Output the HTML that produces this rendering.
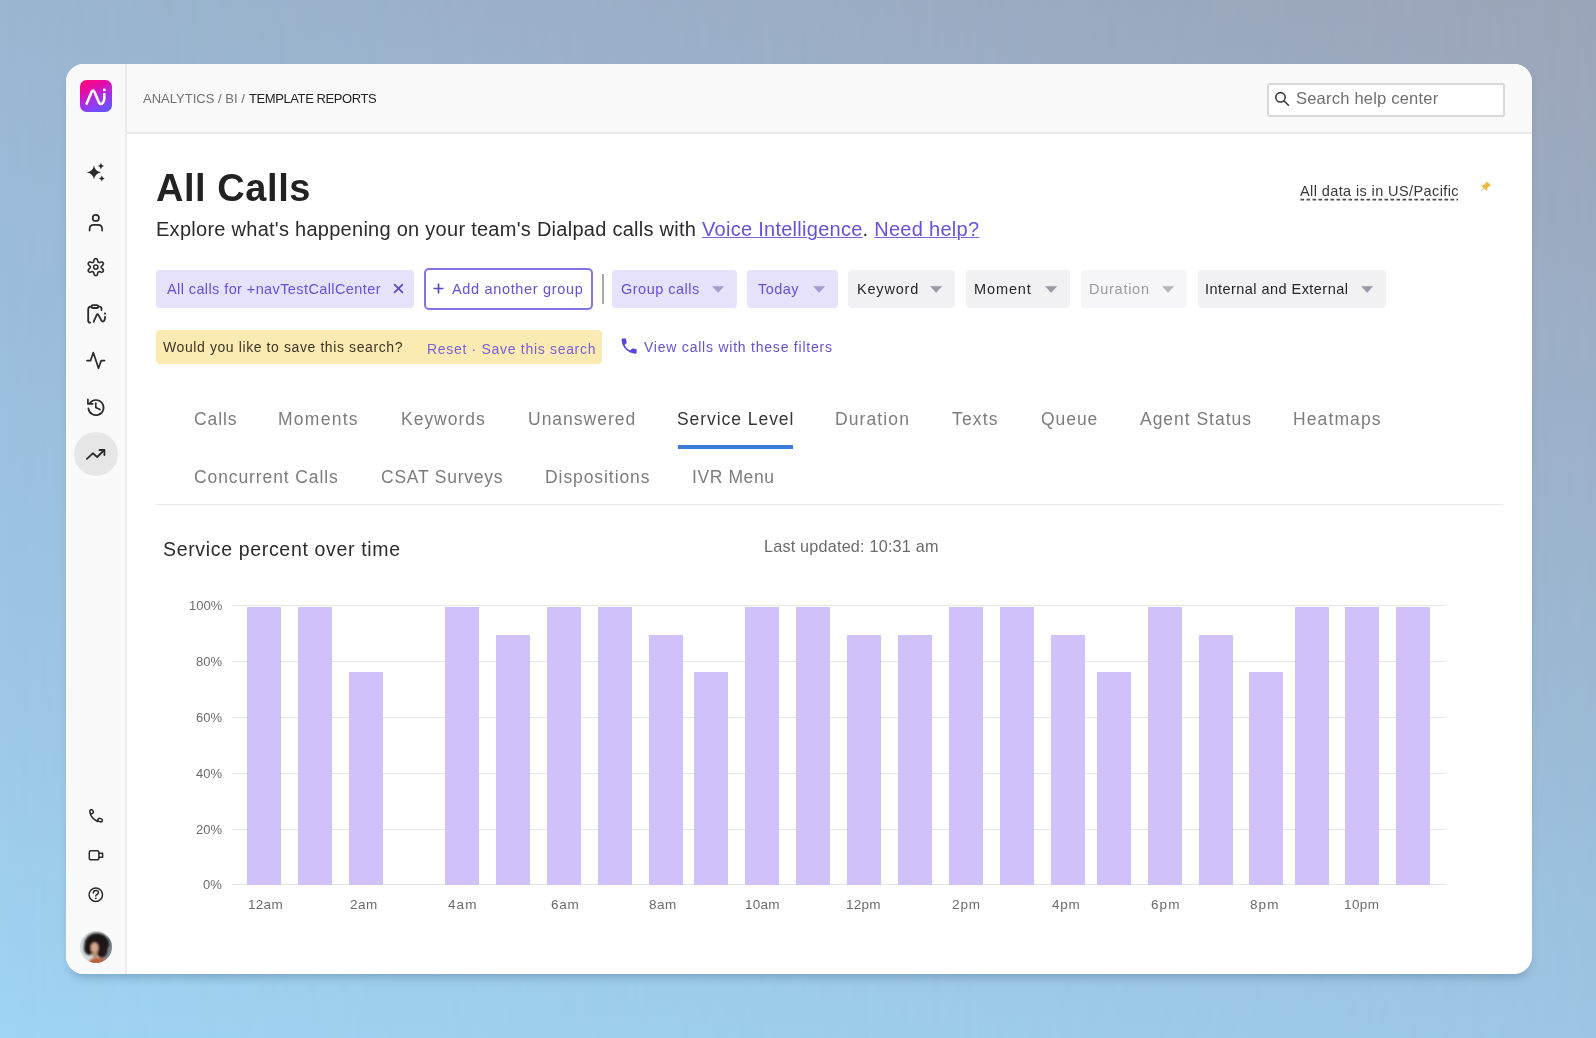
<!DOCTYPE html>
<html><head><meta charset="utf-8"><style>
html,body{margin:0;padding:0;width:1596px;height:1038px;overflow:hidden;}
body{position:relative;font-family:"Liberation Sans", sans-serif;}
.bg{position:absolute;left:0;top:0;width:1596px;height:1038px;background:linear-gradient(180deg,#9ab6d1 0%,#9dc6e6 65%,#9fd4f4 100%);}
.bg2{position:absolute;left:0;top:0;width:1596px;height:1038px;background:linear-gradient(180deg,#9ba4b8 0%,#9bb6d0 60%,#9bc6e3 100%);-webkit-mask-image:linear-gradient(90deg,transparent 0%,rgba(0,0,0,0.5) 50%,#000 100%);mask-image:linear-gradient(90deg,transparent 0%,rgba(0,0,0,0.5) 50%,#000 100%);}
.t{position:absolute;white-space:nowrap;will-change:transform;}
.lnk{color:#6650dc;text-decoration:underline;text-decoration-thickness:1.2px;text-underline-offset:1px;text-decoration-color:#7466e0;}
svg{position:absolute;overflow:visible}
</style></head><body>
<div class="bg"></div><div class="bg2"></div>
<div style="position:absolute;left:66px;top:64px;width:1466px;height:910px;background:#fff;border-radius:18px;box-shadow:0 7px 10px -4px rgba(40,70,100,0.32);overflow:hidden"></div>
<div style="position:absolute;left:66px;top:64px;width:59px;height:910px;background:#f9f9f9;border-right:2px solid #ececec;border-radius:18px 0 0 18px"></div>
<div style="position:absolute;left:127px;top:64px;width:1405px;height:68px;background:#f9f9f9;border-bottom:2px solid #e9e9e9;border-radius:0 18px 0 0"></div>
<div class="t" style="left:142.80px;top:91.80px;font-size:13px;line-height:13px;color:#707070;font-weight:400;letter-spacing:0.012px;">ANALYTICS / BI /</div>
<div class="t" style="left:248.80px;top:91.80px;font-size:13px;line-height:13px;color:#222222;font-weight:400;letter-spacing:-0.408px;">TEMPLATE REPORTS</div>
<div style="position:absolute;left:1267px;top:82.5px;width:234px;height:30px;background:#fff;border:2px solid #d9d9d9;border-radius:3px"></div>
<div class="t" style="left:1296.00px;top:90.03px;font-size:16.5px;line-height:16.5px;color:#6f6f6f;font-weight:400;letter-spacing:0.217px;">Search help center</div>
<div class="t" style="left:156.00px;top:169.03px;font-size:38px;line-height:38px;color:#222;font-weight:700;letter-spacing:0.556px;">All Calls</div>
<div class="t" style="left:156.00px;top:218.87px;font-size:20px;line-height:20px;color:#2b2b2b;font-weight:400;letter-spacing:0.27px;">Explore what's happening on your team's Dialpad calls with <span class="lnk">Voice Intelligence</span>. <span class="lnk">Need help?</span></div>
<div class="t" style="left:1300.00px;top:183.73px;font-size:14.5px;line-height:14.5px;color:#383838;font-weight:400;letter-spacing:0.394px;">All data is in US/Pacific</div>
<svg style="left:0;top:0" width="1" height="1"><path d="M1300.5 199.6 H1458" stroke="#4a4a4a" stroke-width="1.6" stroke-dasharray="3.6 2.4"/></svg>
<div style="position:absolute;left:156px;top:270px;width:258px;height:37.5px;background:#e7e2fc;border-radius:4px"></div>
<div class="t" style="left:166.50px;top:281.73px;font-size:14.5px;line-height:14.5px;color:#6650d6;font-weight:400;letter-spacing:0.402px;">All calls for +navTestCallCenter</div>
<svg style="left:393px;top:283px" width="11" height="11"><path d="M1.6 1.6 L9.4 9.4 M9.4 1.6 L1.6 9.4" stroke="#5a48c8" stroke-width="1.7" stroke-linecap="round"/></svg>
<div style="position:absolute;left:424px;top:268px;width:165px;height:38px;border:2px solid #8275ea;border-radius:5px;background:#fff"></div>
<svg style="left:433px;top:283px" width="11" height="11"><path d="M5.5 0.5 V10.5 M0.5 5.5 H10.5" stroke="#5a48c8" stroke-width="1.7"/></svg>
<div class="t" style="left:451.50px;top:281.73px;font-size:14.5px;line-height:14.5px;color:#6650d6;font-weight:400;letter-spacing:0.662px;">Add another group</div>
<div style="position:absolute;left:602px;top:274px;width:2px;height:30px;background:#a9a9a9"></div>
<div style="position:absolute;left:612px;top:270px;width:125px;height:37.5px;background:#e7e2fc;border-radius:4px"></div>
<div class="t" style="left:620.50px;top:281.73px;font-size:14.5px;line-height:14.5px;color:#6650d6;font-weight:400;letter-spacing:0.485px;">Group calls</div>
<svg style="left:712px;top:286.3px" width="13" height="8"><path d="M0.6 0.4 L11.6 0.4 L6.1 6.5 Z" fill="#a59dd2" stroke="#a59dd2" stroke-width="0.6" stroke-linejoin="round"/></svg>
<div style="position:absolute;left:747px;top:270px;width:91px;height:37.5px;background:#e7e2fc;border-radius:4px"></div>
<div class="t" style="left:758.00px;top:281.73px;font-size:14.5px;line-height:14.5px;color:#6650d6;font-weight:400;letter-spacing:0.455px;">Today</div>
<svg style="left:813px;top:286.3px" width="13" height="8"><path d="M0.6 0.4 L11.6 0.4 L6.1 6.5 Z" fill="#a59dd2" stroke="#a59dd2" stroke-width="0.6" stroke-linejoin="round"/></svg>
<div style="position:absolute;left:848px;top:270px;width:107px;height:37.5px;background:#f1f1f4;border-radius:4px"></div>
<div class="t" style="left:856.50px;top:281.73px;font-size:14.5px;line-height:14.5px;color:#262626;font-weight:400;letter-spacing:0.8px;">Keyword</div>
<svg style="left:930px;top:286.3px" width="13" height="8"><path d="M0.6 0.4 L11.6 0.4 L6.1 6.5 Z" fill="#9b99a8" stroke="#9b99a8" stroke-width="0.6" stroke-linejoin="round"/></svg>
<div style="position:absolute;left:966px;top:270px;width:104px;height:37.5px;background:#f1f1f4;border-radius:4px"></div>
<div class="t" style="left:973.50px;top:281.73px;font-size:14.5px;line-height:14.5px;color:#262626;font-weight:400;letter-spacing:0.89px;">Moment</div>
<svg style="left:1045px;top:286.3px" width="13" height="8"><path d="M0.6 0.4 L11.6 0.4 L6.1 6.5 Z" fill="#9b99a8" stroke="#9b99a8" stroke-width="0.6" stroke-linejoin="round"/></svg>
<div style="position:absolute;left:1081px;top:270px;width:106px;height:37.5px;background:#f6f6f8;border-radius:4px"></div>
<div class="t" style="left:1089.00px;top:281.73px;font-size:14.5px;line-height:14.5px;color:#9b9b9b;font-weight:400;letter-spacing:0.738px;">Duration</div>
<svg style="left:1162px;top:286.3px" width="13" height="8"><path d="M0.6 0.4 L11.6 0.4 L6.1 6.5 Z" fill="#b6b4c0" stroke="#b6b4c0" stroke-width="0.6" stroke-linejoin="round"/></svg>
<div style="position:absolute;left:1198px;top:270px;width:188px;height:37.5px;background:#f1f1f4;border-radius:4px"></div>
<div class="t" style="left:1205.00px;top:281.73px;font-size:14.5px;line-height:14.5px;color:#262626;font-weight:400;letter-spacing:0.455px;">Internal and External</div>
<svg style="left:1361px;top:286.3px" width="13" height="8"><path d="M0.6 0.4 L11.6 0.4 L6.1 6.5 Z" fill="#9b99a8" stroke="#9b99a8" stroke-width="0.6" stroke-linejoin="round"/></svg>
<div style="position:absolute;left:156px;top:330px;width:446px;height:34px;background:#fbeab2;border-radius:4px"></div>
<div class="t" style="left:163.00px;top:340.25px;font-size:14px;line-height:14px;color:#3b3628;font-weight:400;letter-spacing:0.595px;">Would you like to save this search?</div>
<div class="t" style="left:426.50px;top:341.95px;font-size:14px;line-height:14px;color:#7a5fd6;font-weight:400;letter-spacing:0.693px;">Reset · Save this search</div>
<div class="t" style="left:644.00px;top:339.65px;font-size:14px;line-height:14px;color:#6650d6;font-weight:400;letter-spacing:0.776px;">View calls with these filters</div>
<div class="t" style="left:194.10px;top:410.99px;font-size:17.5px;line-height:17.5px;color:#7c7c7c;font-weight:400;letter-spacing:0.93px;">Calls</div>
<div class="t" style="left:278.30px;top:410.99px;font-size:17.5px;line-height:17.5px;color:#7c7c7c;font-weight:400;letter-spacing:1.275px;">Moments</div>
<div class="t" style="left:400.70px;top:410.99px;font-size:17.5px;line-height:17.5px;color:#7c7c7c;font-weight:400;letter-spacing:0.987px;">Keywords</div>
<div class="t" style="left:528.00px;top:410.99px;font-size:17.5px;line-height:17.5px;color:#7c7c7c;font-weight:400;letter-spacing:1.0px;">Unanswered</div>
<div class="t" style="left:677.00px;top:410.99px;font-size:17.5px;line-height:17.5px;color:#363636;font-weight:400;letter-spacing:0.945px;">Service Level</div>
<div class="t" style="left:834.50px;top:410.99px;font-size:17.5px;line-height:17.5px;color:#7c7c7c;font-weight:400;letter-spacing:1.111px;">Duration</div>
<div class="t" style="left:952.00px;top:410.99px;font-size:17.5px;line-height:17.5px;color:#7c7c7c;font-weight:400;letter-spacing:1.155px;">Texts</div>
<div class="t" style="left:1040.50px;top:410.99px;font-size:17.5px;line-height:17.5px;color:#7c7c7c;font-weight:400;letter-spacing:0.94px;">Queue</div>
<div class="t" style="left:1139.50px;top:410.99px;font-size:17.5px;line-height:17.5px;color:#7c7c7c;font-weight:400;letter-spacing:0.974px;">Agent Status</div>
<div class="t" style="left:1292.50px;top:410.99px;font-size:17.5px;line-height:17.5px;color:#7c7c7c;font-weight:400;letter-spacing:1.112px;">Heatmaps</div>
<div class="t" style="left:194.10px;top:468.79px;font-size:17.5px;line-height:17.5px;color:#7c7c7c;font-weight:400;letter-spacing:0.9px;">Concurrent Calls</div>
<div class="t" style="left:380.50px;top:468.79px;font-size:17.5px;line-height:17.5px;color:#7c7c7c;font-weight:400;letter-spacing:0.764px;">CSAT Surveys</div>
<div class="t" style="left:544.50px;top:468.79px;font-size:17.5px;line-height:17.5px;color:#7c7c7c;font-weight:400;letter-spacing:0.925px;">Dispositions</div>
<div class="t" style="left:691.50px;top:468.79px;font-size:17.5px;line-height:17.5px;color:#7c7c7c;font-weight:400;letter-spacing:0.597px;">IVR Menu</div>
<div style="position:absolute;left:678px;top:445px;width:115px;height:4px;background:#3b7cdb"></div>
<div style="position:absolute;left:156px;top:504px;width:1347px;height:1px;background:#ebebeb"></div>
<div class="t" style="left:163.00px;top:539.69px;font-size:19.5px;line-height:19.5px;color:#2b2b2b;font-weight:400;letter-spacing:0.666px;">Service percent over time</div>
<div class="t" style="left:763.50px;top:538.49px;font-size:16.2px;line-height:16.2px;color:#6b6b6b;font-weight:400;letter-spacing:0.206px;">Last updated: 10:31 am</div>
<div class="t" style="right:1374px;top:598.90px;font-size:13px;line-height:13px;color:#6b6b6b">100%</div>
<div style="position:absolute;left:232px;top:605px;width:1214px;height:1px;background:#e6e6e6"></div>
<div class="t" style="right:1374px;top:654.90px;font-size:13px;line-height:13px;color:#6b6b6b">80%</div>
<div style="position:absolute;left:232px;top:661px;width:1214px;height:1px;background:#e6e6e6"></div>
<div class="t" style="right:1374px;top:710.90px;font-size:13px;line-height:13px;color:#6b6b6b">60%</div>
<div style="position:absolute;left:232px;top:717px;width:1214px;height:1px;background:#e6e6e6"></div>
<div class="t" style="right:1374px;top:766.90px;font-size:13px;line-height:13px;color:#6b6b6b">40%</div>
<div style="position:absolute;left:232px;top:773px;width:1214px;height:1px;background:#e6e6e6"></div>
<div class="t" style="right:1374px;top:822.90px;font-size:13px;line-height:13px;color:#6b6b6b">20%</div>
<div style="position:absolute;left:232px;top:829px;width:1214px;height:1px;background:#e6e6e6"></div>
<div class="t" style="right:1374px;top:877.90px;font-size:13px;line-height:13px;color:#6b6b6b">0%</div>
<div style="position:absolute;left:232px;top:884px;width:1214px;height:1px;background:#e6e6e6"></div>
<div style="position:absolute;left:247px;top:607px;width:34px;height:278px;background:#d0c1fb"></div>
<div style="position:absolute;left:298px;top:607px;width:34px;height:278px;background:#d0c1fb"></div>
<div style="position:absolute;left:349px;top:672px;width:34px;height:213px;background:#d0c1fb"></div>
<div style="position:absolute;left:445px;top:607px;width:34px;height:278px;background:#d0c1fb"></div>
<div style="position:absolute;left:496px;top:635px;width:34px;height:250px;background:#d0c1fb"></div>
<div style="position:absolute;left:547px;top:607px;width:34px;height:278px;background:#d0c1fb"></div>
<div style="position:absolute;left:598px;top:607px;width:34px;height:278px;background:#d0c1fb"></div>
<div style="position:absolute;left:649px;top:635px;width:34px;height:250px;background:#d0c1fb"></div>
<div style="position:absolute;left:694px;top:672px;width:34px;height:213px;background:#d0c1fb"></div>
<div style="position:absolute;left:745px;top:607px;width:34px;height:278px;background:#d0c1fb"></div>
<div style="position:absolute;left:796px;top:607px;width:34px;height:278px;background:#d0c1fb"></div>
<div style="position:absolute;left:847px;top:635px;width:34px;height:250px;background:#d0c1fb"></div>
<div style="position:absolute;left:898px;top:635px;width:34px;height:250px;background:#d0c1fb"></div>
<div style="position:absolute;left:949px;top:607px;width:34px;height:278px;background:#d0c1fb"></div>
<div style="position:absolute;left:1000px;top:607px;width:34px;height:278px;background:#d0c1fb"></div>
<div style="position:absolute;left:1051px;top:635px;width:34px;height:250px;background:#d0c1fb"></div>
<div style="position:absolute;left:1097px;top:672px;width:34px;height:213px;background:#d0c1fb"></div>
<div style="position:absolute;left:1148px;top:607px;width:34px;height:278px;background:#d0c1fb"></div>
<div style="position:absolute;left:1199px;top:635px;width:34px;height:250px;background:#d0c1fb"></div>
<div style="position:absolute;left:1249px;top:672px;width:34px;height:213px;background:#d0c1fb"></div>
<div style="position:absolute;left:1295px;top:607px;width:34px;height:278px;background:#d0c1fb"></div>
<div style="position:absolute;left:1345px;top:607px;width:34px;height:278px;background:#d0c1fb"></div>
<div style="position:absolute;left:1396px;top:607px;width:34px;height:278px;background:#d0c1fb"></div>
<div class="t" style="left:247.50px;top:897.97px;font-size:13.5px;line-height:13.5px;color:#6b6b6b;font-weight:400;letter-spacing:0.3px;">12am</div>
<div class="t" style="left:349.80px;top:897.97px;font-size:13.5px;line-height:13.5px;color:#6b6b6b;font-weight:400;letter-spacing:0.45px;">2am</div>
<div class="t" style="left:447.90px;top:897.97px;font-size:13.5px;line-height:13.5px;color:#6b6b6b;font-weight:400;letter-spacing:1.08px;">4am</div>
<div class="t" style="left:550.60px;top:897.97px;font-size:13.5px;line-height:13.5px;color:#6b6b6b;font-weight:400;letter-spacing:0.765px;">6am</div>
<div class="t" style="left:649.30px;top:897.97px;font-size:13.5px;line-height:13.5px;color:#6b6b6b;font-weight:400;letter-spacing:0.495px;">8am</div>
<div class="t" style="left:744.50px;top:897.97px;font-size:13.5px;line-height:13.5px;color:#6b6b6b;font-weight:400;letter-spacing:0.27px;">10am</div>
<div class="t" style="left:846.00px;top:897.97px;font-size:13.5px;line-height:13.5px;color:#6b6b6b;font-weight:400;letter-spacing:0.27px;">12pm</div>
<div class="t" style="left:952.10px;top:897.97px;font-size:13.5px;line-height:13.5px;color:#6b6b6b;font-weight:400;letter-spacing:0.9px;">2pm</div>
<div class="t" style="left:1052.10px;top:897.97px;font-size:13.5px;line-height:13.5px;color:#6b6b6b;font-weight:400;letter-spacing:0.72px;">4pm</div>
<div class="t" style="left:1150.50px;top:897.97px;font-size:13.5px;line-height:13.5px;color:#6b6b6b;font-weight:400;letter-spacing:1.08px;">6pm</div>
<div class="t" style="left:1249.70px;top:897.97px;font-size:13.5px;line-height:13.5px;color:#6b6b6b;font-weight:400;letter-spacing:1.08px;">8pm</div>
<div class="t" style="left:1343.80px;top:897.97px;font-size:13.5px;line-height:13.5px;color:#6b6b6b;font-weight:400;letter-spacing:0.39px;">10pm</div>
<svg style="left:80px;top:80px" width="32" height="32" viewBox="0 0 32 32">
<defs><linearGradient id="lg" x1="0.15" y1="0" x2="0.6" y2="1"><stop offset="0" stop-color="#fa0c7c"/><stop offset="0.3" stop-color="#e60aa6"/><stop offset="0.62" stop-color="#a82ee8"/><stop offset="1" stop-color="#6a52ff"/></linearGradient></defs>
<rect x="0" y="0" width="32" height="32" rx="6.5" fill="url(#lg)"/>
<path d="M6.6 23.8 L11.6 12 Q13 9 14.5 12 L18.6 21.8 Q20.6 25.8 23 22.6 Q24.3 20.8 24.3 18 L24.3 14.4" fill="none" stroke="#fff" stroke-width="2.6" stroke-linecap="round" stroke-linejoin="round"/>
<circle cx="24.3" cy="9.9" r="1.45" fill="#fff"/>
</svg>
<svg style="left:0;top:0" width="1" height="1"><path d="M94 165.3 Q94.852 171.548 101.1 172.4 Q94.852 173.252 94 179.5 Q93.148 173.252 86.9 172.4 Q93.148 171.548 94 165.3 Z M100.9 163.0 Q101.45800000000001 165.542 104.0 166.1 Q101.45800000000001 166.658 100.9 169.2 Q100.342 166.658 97.80000000000001 166.1 Q100.342 165.542 100.9 163.0 Z M101.8 175.5 Q102.322 177.87800000000001 104.7 178.4 Q102.322 178.922 101.8 181.3 Q101.27799999999999 178.922 98.89999999999999 178.4 Q101.27799999999999 177.87800000000001 101.8 175.5 Z" fill="#2b2b2b"/></svg>
<svg style="left:0;top:0" width="1" height="1"><circle cx="95.8" cy="217.9" r="3.1" fill="none" stroke="#2b2b2b" stroke-width="1.7"/><path d="M89.6 230.6 L89.6 229 Q89.6 224.8 93.6 224.8 L98 224.8 Q102.1 224.8 102.1 229 L102.1 230.6" fill="none" stroke="#2b2b2b" stroke-width="1.7" stroke-linecap="round"/></svg>
<svg style="left:0;top:0" width="1" height="1"><path d="M101.25 267.10 L101.27 267.39 L101.36 267.68 L101.56 268.01 L101.95 268.41 L102.51 268.90 L103.04 269.45 L103.33 269.99 L103.39 270.48 L103.30 270.92 L103.12 271.33 L102.86 271.69 L102.52 271.99 L102.07 272.18 L101.46 272.19 L100.71 272.01 L100.01 271.77 L99.47 271.63 L99.08 271.62 L98.78 271.70 L98.52 271.82 L98.29 271.98 L98.07 272.20 L97.89 272.54 L97.74 273.08 L97.60 273.81 L97.38 274.55 L97.06 275.07 L96.67 275.37 L96.24 275.51 L95.80 275.55 L95.36 275.51 L94.93 275.37 L94.54 275.07 L94.22 274.55 L94.00 273.81 L93.86 273.08 L93.71 272.54 L93.53 272.20 L93.31 271.98 L93.08 271.82 L92.82 271.70 L92.52 271.62 L92.13 271.63 L91.59 271.77 L90.89 272.01 L90.14 272.19 L89.53 272.18 L89.08 271.99 L88.74 271.69 L88.48 271.33 L88.30 270.92 L88.21 270.48 L88.27 269.99 L88.56 269.45 L89.09 268.90 L89.65 268.41 L90.04 268.01 L90.24 267.68 L90.33 267.39 L90.35 267.10 L90.33 266.81 L90.24 266.52 L90.04 266.19 L89.65 265.79 L89.09 265.30 L88.56 264.75 L88.27 264.21 L88.21 263.72 L88.30 263.28 L88.48 262.88 L88.74 262.51 L89.08 262.21 L89.53 262.02 L90.14 262.01 L90.89 262.19 L91.59 262.43 L92.13 262.57 L92.52 262.58 L92.82 262.50 L93.07 262.38 L93.31 262.22 L93.53 262.00 L93.71 261.66 L93.86 261.12 L94.00 260.39 L94.22 259.65 L94.54 259.13 L94.93 258.83 L95.36 258.69 L95.80 258.65 L96.24 258.69 L96.67 258.83 L97.06 259.13 L97.38 259.65 L97.60 260.39 L97.74 261.12 L97.89 261.66 L98.07 262.00 L98.29 262.22 L98.52 262.38 L98.78 262.50 L99.08 262.58 L99.47 262.57 L100.01 262.43 L100.71 262.19 L101.46 262.01 L102.07 262.02 L102.52 262.21 L102.86 262.51 L103.12 262.88 L103.30 263.28 L103.39 263.72 L103.33 264.21 L103.04 264.75 L102.51 265.30 L101.95 265.79 L101.56 266.19 L101.36 266.52 L101.27 266.81 L101.25 267.10 Z" fill="none" stroke="#2b2b2b" stroke-width="1.6" stroke-linejoin="round"/><circle cx="95.8" cy="267.1" r="2.2" fill="none" stroke="#2b2b2b" stroke-width="1.5"/></svg>
<svg style="left:0;top:0" width="1" height="1"><g fill="none" stroke="#2b2b2b" stroke-width="1.8" stroke-linecap="round" stroke-linejoin="round">
<path d="M90.8 306.6 Q88.2 306.8 88.2 309.4 L88.2 320.6 Q88.3 322.6 90.2 322.7"/>
<rect x="91.6" y="305.2" width="6.6" height="2.8" rx="1.3"/>
<path d="M98.6 306.6 L100 306.6 Q101.5 306.8 101.5 308.6 L101.5 310"/>
<path d="M93.6 321.8 L96.6 315.2 Q97.6 313.2 98.7 315.4 L101.4 320.6 Q102.6 322.4 104 320.8 Q105 319.6 105 317.6 L105 316.8"/>
</g><circle cx="105" cy="313.6" r="1.05" fill="#2b2b2b"/></svg>
<svg style="left:0;top:0" width="1" height="1"><path d="M87 360.6 L90.6 360.6 L93.3 352.6 L98.5 368.3 L101.2 360.6 L104.6 360.6" fill="none" stroke="#2b2b2b" stroke-width="1.7" stroke-linecap="round" stroke-linejoin="round"/></svg>
<svg style="left:0;top:0" width="1" height="1"><g fill="none" stroke="#2b2b2b" stroke-width="1.7" stroke-linecap="round" stroke-linejoin="round">
<path d="M88.4 408.3 A7.6 7.6 0 1 0 89.9 403"/>
<path d="M87.9 399.4 L87.9 403.9 L92.6 403.9"/>
<path d="M95.8 403 L95.8 407.4 L100 409.4"/>
</g></svg>
<div style="position:absolute;left:74px;top:432px;width:44px;height:44px;border-radius:50%;background:#e6e6e6"></div>
<svg style="left:0;top:0" width="1" height="1"><g fill="none" stroke="#2b2b2b" stroke-width="1.8" stroke-linecap="round" stroke-linejoin="round"><path d="M86.9 458.8 L92.8 453.3 L97.2 457 L104.2 450"/><path d="M99.5 450 L104.4 450 L104.4 455"/></g></svg>
<svg style="left:0;top:0" width="1" height="1"><g fill="none" stroke="#2b2b2b" stroke-width="1.5"><ellipse cx="91.5" cy="811.7" rx="1.7" ry="2.0" transform="rotate(-15 91.5 811.7)"/><ellipse cx="100.1" cy="820.1" rx="2.3" ry="1.6" transform="rotate(20 100.1 820.1)"/><path d="M90.3 813.4 Q91.4 818.6 97.8 821.4" stroke-width="1.7" stroke-linecap="round"/></g></svg>
<svg style="left:0;top:0" width="1" height="1"><g fill="none" stroke="#2b2b2b" stroke-width="1.5" stroke-linejoin="round"><rect x="89.3" y="850.8" width="9.6" height="9.0" rx="1.8"/><path d="M98.9 853.3 L102.6 853.3 L102.6 857.3 L98.9 857.3" stroke-linecap="round"/></g></svg>
<svg style="left:0;top:0" width="1" height="1"><circle cx="95.8" cy="894.8" r="6.7" fill="none" stroke="#2b2b2b" stroke-width="1.5"/><path d="M93.3 893 Q93.3 890.4 95.9 890.4 Q98.4 890.4 98.4 892.6 Q98.4 894 96.6 894.8 Q95.8 895.2 95.8 896" fill="none" stroke="#2b2b2b" stroke-width="1.5" stroke-linecap="round"/><circle cx="95.8" cy="898.3" r="0.9" fill="#2b2b2b"/></svg>
<svg style="left:80px;top:931px" width="32" height="32" viewBox="0 0 32 32">
<defs><clipPath id="av"><circle cx="16" cy="16" r="16"/></clipPath>
<filter id="bl" x="-20%" y="-20%" width="140%" height="140%"><feGaussianBlur stdDeviation="0.9"/></filter></defs>
<g clip-path="url(#av)">
<rect width="32" height="32" fill="#d3dcdf"/>
<g filter="url(#bl)">
<rect x="24" y="6" width="10" height="22" fill="#7d8c92"/>
<ellipse cx="17" cy="13" rx="12.5" ry="11" fill="#1c1312"/>
<ellipse cx="9" cy="17" rx="5" ry="7" fill="#1f1614"/>
<ellipse cx="22" cy="19" rx="6" ry="8" fill="#211714"/>
<ellipse cx="14.6" cy="16.8" rx="3.8" ry="5.4" fill="#d3a98e"/>
<rect x="12.8" y="20.5" width="4.4" height="7" fill="#c0906f"/>
<ellipse cx="18.5" cy="31.5" rx="10" ry="4.5" fill="#b9603e"/>
</g>
</g></svg>
<svg style="left:0;top:0" width="1" height="1"><g fill="none" stroke="#3a3a3a" stroke-width="1.6" stroke-linecap="round"><circle cx="1280.5" cy="97.3" r="4.7"/><path d="M1284.4 101.3 L1288.4 105.3"/></g></svg>
<svg style="left:0;top:0" width="1" height="1"><g transform="translate(1485 187.2) rotate(45) scale(0.8)"><path d="M-3 -6.5 L3 -6.5 L2.2 -1.2 L4.4 1.6 L-4.4 1.6 L-2.2 -1.2 Z" fill="#f2b536" stroke="#f2b536" stroke-width="0.8" stroke-linejoin="round"/><path d="M0 1.6 L0 7" stroke="#b8b09a" stroke-width="1.1"/></g></svg>
<svg style="left:619px;top:334.5px" width="20" height="20" viewBox="0 0 24 24" ><g transform="scale(0.833)"></g></svg>
<svg style="left:618.5px;top:335.5px" width="20" height="20"><g transform="scale(0.84)"><path d="M6.62 10.79c1.44 2.83 3.76 5.14 6.59 6.59l2.2-2.2c.27-.27.67-.36 1.02-.24 1.12.37 2.33.57 3.57.57.55 0 1 .45 1 1V20c0 .55-.45 1-1 1-9.39 0-17-7.61-17-17 0-.55.45-1 1-1h3.5c.55 0 1 .45 1 1 0 1.25.2 2.45.57 3.57.11.35.03.74-.25 1.02l-2.2 2.2z" fill="#5a44d8"/></g></svg>
</body></html>
